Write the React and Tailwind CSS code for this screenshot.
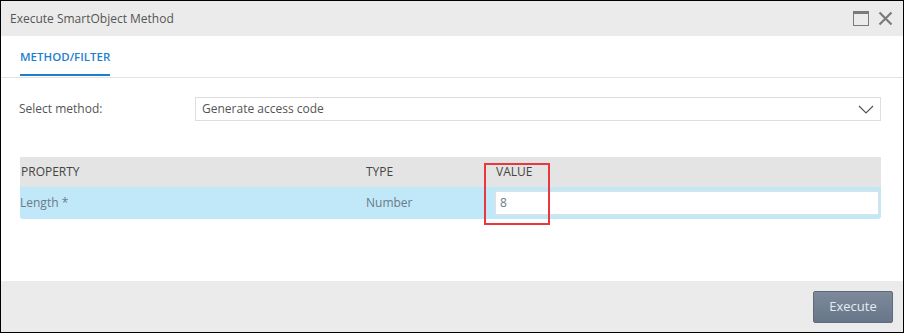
import React from 'react'

// Execute SmartObject Method dialog
export default function App() {
  return (
    <div
      className="w-[904px] h-[333px] border border-black bg-white flex flex-col text-[12px] text-[#555]"
      style={{ fontFamily: '"Open Sans", "Liberation Sans", sans-serif' }}
    >
      <header className="h-[35px] bg-[#ebebeb] flex items-center justify-between pl-[9px] pr-[10px]">
        <span className="text-[#555]">Execute SmartObject Method</span>
        <div className="flex items-center gap-[9px]">
          <svg width="16" height="15" viewBox="0 0 16 15">
            <rect x="0.5" y="0.5" width="15" height="14" fill="none" stroke="#7a7a7a" />
            <rect x="0" y="0" width="16" height="3" fill="#7a7a7a" />
          </svg>
          <svg width="15" height="15" viewBox="0 0 15 15">
            <path d="M1.5 1.5 L13.5 13.5 M13.5 1.5 L1.5 13.5" stroke="#7a7a7a" strokeWidth="2.2" />
          </svg>
        </div>
      </header>

      <nav className="h-[42px] border-b border-[#e3e3e3] px-[19px] flex items-end">
        <div className="h-full flex flex-col justify-between pt-[12px]">
          <span className="font-semibold text-[11.5px] text-[#1d7fcf]">METHOD/FILTER</span>
          <div className="h-[2px] bg-[#1b80cf] mb-[1px]" />
        </div>
      </nav>

      <main className="flex-1 px-[18px] pt-[19px]">
        <div className="flex items-center">
          <label className="w-[176px]">Select method:</label>
          <div className="flex-1 mr-[4px] h-[24px] border border-[#dedede] flex items-center justify-between pl-[6px] pr-[6px]">
            <span>Generate access code</span>
            <svg width="16" height="9" viewBox="0 0 16 9">
              <path d="M1 1 L8 8 L15 1" fill="none" stroke="#555" strokeWidth="1.2" />
            </svg>
          </div>
        </div>

        <div className="mt-[36px] mr-[4px] ml-[1px] rounded-b-[3px] overflow-hidden">
          <div className="h-[30px] bg-[#e4e4e4] flex items-center text-[#444]">
            <span className="w-[345px] pl-[1px]">PROPERTY</span>
            <span className="w-[130px] pl-[1px]">TYPE</span>
            <span className="pl-[1px]">VALUE</span>
          </div>
          <div className="h-[32px] bg-[#c0e8f8] flex items-center text-[#6c7a88]">
            <span className="w-[345px]">Length *</span>
            <span className="w-[130px] pl-[1px]">Number</span>
            <div className="flex-1 mr-[2px] h-[24px] bg-white border border-[#e0e0e0] flex items-center pl-[4px] text-[#6c7a88]">
              8
            </div>
          </div>
        </div>
      </main>

      <footer className="h-[51px] bg-[#ebebeb] flex items-center justify-end pr-[10px]">
        <button className="w-[80px] h-[32px] rounded-[2px] border border-[#5e6b7c] bg-gradient-to-b from-[#7d8a9c] to-[#687689] text-[#e6ebf2] text-[13px]">
          Execute
        </button>
      </footer>

      <div className="absolute left-[484px] top-[163px] w-[66px] h-[62px] border-2 border-[#e8383d] pointer-events-none" />
    </div>
  )
}
